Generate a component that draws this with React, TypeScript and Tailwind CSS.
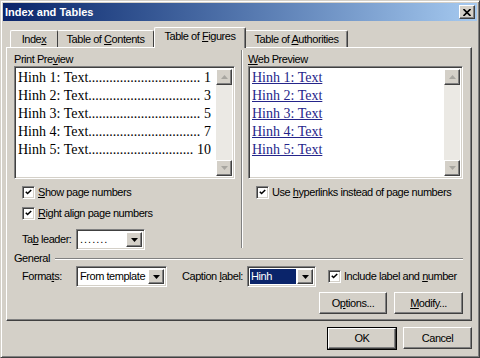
import React from 'react'

const raised =
    'bg-[#d4d0c8] border border-t-white border-l-white border-r-[#404040] border-b-[#404040] shadow-[inset_-1px_-1px_0_#808080]'
const sunken =
    'border border-t-[#808080] border-l-[#808080] border-r-white border-b-white shadow-[inset_1px_1px_0_#404040,inset_-1px_-1px_0_#d4d0c8]'

const Check = () => (
    <div className={`w-[13px] h-[13px] bg-white p-[2px] flex items-center justify-center ${sunken}`}>
        <svg width="9" height="9" viewBox="0 0 9 9">
            <path d="M1 3.5 L3.3 5.8 L8 1.2" fill="none" stroke="#000" strokeWidth="2" />
        </svg>
    </div>
)

const DropButton = () => (
    <div className={`w-[16px] h-full flex items-center justify-center ${raised}`}>
        <svg width="7" height="4" viewBox="0 0 7 4">
            <path d="M0 0 H7 L3.5 4 Z" fill="#000" />
        </svg>
    </div>
)

const Select = ({ width, children }: { width: string; children: React.ReactNode }) => (
    <div className={`${width} h-[21px] bg-white p-[2px] flex ${sunken}`}>
        <div className="flex-1 flex items-center overflow-hidden">{children}</div>
        <DropButton />
    </div>
)

const ScrollArrow = ({ down }: { down?: boolean }) => (
    <div className={`w-[16px] h-[16px] flex items-center justify-center ${raised}`}>
        <svg width="7" height="4" viewBox="0 0 7 4">
            <path d={down ? 'M0 0 H7 L3.5 4 Z' : 'M0 4 H7 L3.5 0 Z'} fill="#a8a6a0" />
        </svg>
    </div>
)

const PreviewBox = ({ children }: { children: React.ReactNode }) => (
    <div className={`h-[113px] bg-white p-[2px] flex ${sunken}`}>
        <div className="flex-1 overflow-hidden">{children}</div>
        <div className="w-[16px] flex flex-col bg-[#ebe9e4]">
            <ScrollArrow />
            <div className="flex-1" />
            <ScrollArrow down />
        </div>
    </div>
)

const Button = ({ width, children, isDefault }: { width: string; children: React.ReactNode; isDefault?: boolean }) =>
    isDefault ? (
        <div className={`${width} h-[23px] border border-black`}>
            <div className={`w-full h-full flex items-center justify-center ${raised}`}>{children}</div>
        </div>
    ) : (
        <div className={`${width} h-[22px] flex items-center justify-center ${raised}`}>{children}</div>
    )

const entries = [
    ['Hinh 1: Text', '1'],
    ['Hinh 2: Text', '3'],
    ['Hinh 3: Text', '5'],
    ['Hinh 4: Text', '7'],
    ['Hinh 5: Text', '10'],
]

export default function App() {
    return (
        <div className="w-[480px] h-[358px] overflow-hidden bg-[#d4d0c8] border border-t-[#d4d0c8] border-l-[#d4d0c8] border-r-[#404040] border-b-[#404040] shadow-[inset_1px_1px_0_#ffffff,inset_-1px_-1px_0_#808080] p-[2px] flex flex-col font-['Liberation_Sans',Arial,sans-serif] text-[11px] tracking-[-0.45px] text-black">
            {/* Title bar */}
            <div className="h-[18px] shrink-0 flex items-center justify-between pl-[2px] pr-[2px] bg-gradient-to-r from-[#0a246a] to-[#a6caf0]">
                <span className="text-white font-bold tracking-normal">Index and Tables</span>
                <div className={`w-[16px] h-[14px] flex items-center justify-center ${raised}`}>
                    <svg width="8" height="7" viewBox="0 0 8 7">
                        <path d="M0.5 0 L7.5 7 M7.5 0 L0.5 7" stroke="#000" strokeWidth="1.6" />
                    </svg>
                </div>
            </div>

            {/* Tabs */}
            <div className="mt-[6px] h-[21px] flex items-end ml-[7px] shrink-0">
                <div className="w-[48px] h-[17px] mb-[1px] flex items-center justify-center border-t border-l border-r border-t-white border-l-white border-r-[#404040] rounded-t-[2px]">
                    <span>
                        Inde<u>x</u>
                    </span>
                </div>
                <div className="w-[96px] h-[17px] mb-[1px] flex items-center justify-center border-t border-r border-t-white border-r-[#404040] rounded-tr-[2px]">
                    <span>
                        Table of <u>C</u>ontents
                    </span>
                </div>
                <div className="relative z-10 w-[92px] h-[21px] pb-[3px] bg-[#d4d0c8] flex items-center justify-center border-t border-l border-r border-t-white border-l-white border-r-[#404040] rounded-t-[2px] shadow-[inset_-1px_0_0_#808080]">
                    <span>
                        Table of <u>F</u>igures
                    </span>
                </div>
                <div className="w-[102px] h-[17px] mb-[1px] flex items-center justify-center border-t border-r border-t-white border-r-[#404040] rounded-tr-[2px] shadow-[inset_-1px_0_0_#808080]">
                    <span>
                        Table of <u>A</u>uthorities
                    </span>
                </div>
            </div>

            {/* Tab panel */}
            <div className="-mt-[1px] ml-[3px] w-[466px] h-[274px] shrink-0 border border-t-white border-l-white border-r-[#404040] border-b-[#404040] shadow-[inset_-1px_-1px_0_#808080] pl-[7px] pr-[8px] pt-[4px] flex flex-col">
                <div className="flex h-[198px]">
                    {/* Print preview */}
                    <div className="w-[221px] flex flex-col">
                        <div className="h-[14px] leading-[14px]">
                            Print Pre<u>v</u>iew
                        </div>
                        <PreviewBox>
                            <div className="font-['Liberation_Serif','Times_New_Roman',serif] text-[14px] leading-[18px] tracking-normal pl-[1px] pr-[5px]">
                                {entries.map(([label, page]) => (
                                    <div key={label} className="flex justify-between whitespace-nowrap">
                                        <span>
                                            {label}
                                            {'.'.repeat(page.length > 1 ? 30 : 32)}
                                        </span>
                                        <span>{page}</span>
                                    </div>
                                ))}
                            </div>
                        </PreviewBox>
                        <div className="mt-[5px] h-[17px] pl-[8px] flex items-center gap-[3px]">
                            <Check />
                            <span>
                                <u>S</u>how page numbers
                            </span>
                        </div>
                        <div className="mt-[4px] h-[17px] pl-[8px] flex items-center gap-[3px]">
                            <Check />
                            <span>
                                <u>R</u>ight align page numbers
                            </span>
                        </div>
                        <div className="mt-[7px] pl-[8px] flex items-center">
                            <span className="w-[54px]">
                                Ta<u>b</u> leader:
                            </span>
                            <Select width="w-[69px]">
                                <span className="pl-[1px] tracking-[1px]">.......</span>
                            </Select>
                        </div>
                    </div>

                    {/* Separator */}
                    <div className="ml-[6px] w-[2px] -mt-[2px] mb-[2px] border-l border-l-[#808080] border-r border-r-white" />

                    {/* Web preview */}
                    <div className="ml-[5px] w-[215px] flex flex-col">
                        <div className="h-[14px] leading-[14px]">
                            <u>W</u>eb Preview
                        </div>
                        <PreviewBox>
                            <div className="font-['Liberation_Serif','Times_New_Roman',serif] text-[14px] leading-[18px] tracking-normal pl-[1px] text-[#25258a]">
                                {entries.map(([label]) => (
                                    <div key={label}>
                                        <span className="underline">{label}</span>
                                    </div>
                                ))}
                            </div>
                        </PreviewBox>
                        <div className="mt-[5px] h-[17px] pl-[8px] flex items-center gap-[3px]">
                            <Check />
                            <span>
                                Use <u>h</u>yperlinks instead of page numbers
                            </span>
                        </div>
                    </div>
                </div>

                {/* General */}
                <div className="mt-[2px] h-[13px] flex items-center">
                    <span>General</span>
                    <div className="flex-1 ml-[5px] h-[2px] border-t border-t-[#808080] border-b border-b-white" />
                </div>

                <div className="mt-[1px] h-[21px] pl-[8px] flex items-center">
                    <span className="w-[54px]">
                        Forma<u>t</u>s:
                    </span>
                    <Select width="w-[91px]">
                        <span className="pl-[1px]">From template</span>
                    </Select>
                    <span className="ml-[15px] w-[65px]">
                        Caption <u>l</u>abel:
                    </span>
                    <Select width="w-[69px]">
                        <div className="h-full flex-1 bg-[#0a246a] text-white flex items-center pl-[1px] mr-[1px]">Hinh</div>
                    </Select>
                    <div className="ml-[12px] flex items-center gap-[3px]">
                        <Check />
                        <span>
                            Include label and <u>n</u>umber
                        </span>
                    </div>
                </div>

                <div className="mt-[5px] flex justify-end gap-[7px]">
                    <Button width="w-[68px]">
                        <span>
                            O<u>p</u>tions...
                        </span>
                    </Button>
                    <Button width="w-[69px]">
                        <span>
                            <u>M</u>odify...
                        </span>
                    </Button>
                </div>
            </div>

            {/* Dialog buttons */}
            <div className="mt-[6px] pr-[5px] flex justify-end gap-[6px]">
                <Button width="w-[70px]" isDefault>
                    OK
                </Button>
                <Button width="w-[69px]">Cancel</Button>
            </div>
        </div>
    )
}
